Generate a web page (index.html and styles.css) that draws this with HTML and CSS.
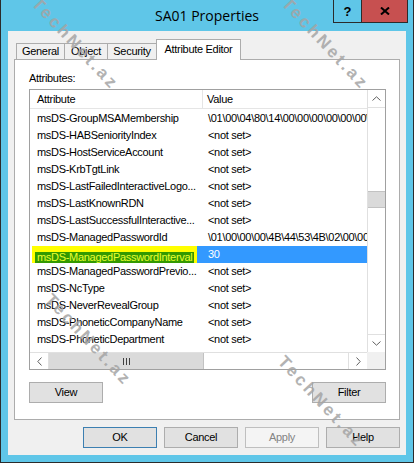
FILE: index.html
```html
<!DOCTYPE html>
<html>
<head>
<meta charset="utf-8">
<link rel="stylesheet" href="styles.css">
</head>
<body>
<div class="window">
  <div class="titlebar">
    <span class="title">SA01 Properties</span>
    <div class="caption">
      <div class="cb-help">?</div>
      <div class="cb-close">
        <svg width="10" height="8" viewBox="0 0 10 8"><path d="M1 0.5 L9 7.5 M9 0.5 L1 7.5" stroke="#000" stroke-width="2" fill="none"/></svg>
      </div>
    </div>
  </div>
  <div class="client">
    <div class="tabs">
      <div class="tab t-general">General</div>
      <div class="tab t-object">Object</div>
      <div class="tab t-security">Security</div>
      <div class="tab active t-attr">Attribute Editor</div>
    </div>
    <div class="panel">
      <div class="label">Attributes:</div>
      <div class="listbox">
        <div class="lv-main">
          <div class="lv-content">
            <div class="lv-header">
              <div class="c1">Attribute</div>
              <div class="c2">Value</div>
            </div>
            <div class="rows">
              <div class="row"><div class="c1">msDS-GroupMSAMembership</div><div class="c2">\01\00\04\80\14\00\00\00\00\00\00\00</div></div>
              <div class="row"><div class="c1">msDS-HABSeniorityIndex</div><div class="c2">&lt;not set&gt;</div></div>
              <div class="row"><div class="c1">msDS-HostServiceAccount</div><div class="c2">&lt;not set&gt;</div></div>
              <div class="row"><div class="c1">msDS-KrbTgtLink</div><div class="c2">&lt;not set&gt;</div></div>
              <div class="row"><div class="c1">msDS-LastFailedInteractiveLogo...</div><div class="c2">&lt;not set&gt;</div></div>
              <div class="row"><div class="c1">msDS-LastKnownRDN</div><div class="c2">&lt;not set&gt;</div></div>
              <div class="row"><div class="c1">msDS-LastSuccessfulInteractive...</div><div class="c2">&lt;not set&gt;</div></div>
              <div class="row"><div class="c1">msDS-ManagedPasswordId</div><div class="c2">\01\00\00\00\4B\44\53\4B\02\00\00\00</div></div>
              <div class="row sel"><div class="c1"><span class="mark"><span class="hl">msDS-ManagedPasswordInterval</span></span></div><div class="c2">30</div></div>
              <div class="row"><div class="c1">msDS-ManagedPasswordPrevio...</div><div class="c2">&lt;not set&gt;</div></div>
              <div class="row"><div class="c1">msDS-NcType</div><div class="c2">&lt;not set&gt;</div></div>
              <div class="row"><div class="c1">msDS-NeverRevealGroup</div><div class="c2">&lt;not set&gt;</div></div>
              <div class="row"><div class="c1">msDS-PhoneticCompanyName</div><div class="c2">&lt;not set&gt;</div></div>
              <div class="row"><div class="c1">msDS-PhoneticDepartment</div><div class="c2">&lt;not set&gt;</div></div>
            </div>
          </div>
          <div class="vscroll">
            <div class="arrow-v">
              <svg width="9" height="5" viewBox="0 0 9 5"><path d="M0.5 4.5 L4.5 0.8 L8.5 4.5" stroke="#606060" fill="none"/></svg>
            </div>
            <div class="vtrack"><div class="vthumb"></div></div>
            <div class="arrow-v">
              <svg width="9" height="5" viewBox="0 0 9 5"><path d="M0.5 0.5 L4.5 4.2 L8.5 0.5" stroke="#606060" fill="none"/></svg>
            </div>
          </div>
        </div>
        <div class="hscroll-row">
          <div class="hscroll">
            <div class="arrow-h">
              <svg width="5" height="9" viewBox="0 0 5 9"><path d="M4.5 0.5 L0.8 4.5 L4.5 8.5" stroke="#606060" fill="none"/></svg>
            </div>
            <div class="htrack">
              <div class="hthumb">
                <svg width="7" height="7" viewBox="0 0 7 7"><path d="M0.5 0 V7 M3.5 0 V7 M6.5 0 V7" stroke="#404040" fill="none"/></svg>
              </div>
            </div>
            <div class="arrow-h">
              <svg width="5" height="9" viewBox="0 0 5 9"><path d="M0.5 0.5 L4.2 4.5 L0.5 8.5" stroke="#606060" fill="none"/></svg>
            </div>
          </div>
          <div class="corner"></div>
        </div>
      </div>
      <div class="panel-buttons">
        <div class="btn">View</div>
        <div class="btn">Filter</div>
      </div>
    </div>
    <div class="dlg-buttons">
      <div class="btn default">OK</div>
      <div class="btn">Cancel</div>
      <div class="btn disabled">Apply</div>
      <div class="btn">Help</div>
    </div>
  </div>
</div>
<div class="wm wm1">TechNet.az</div>
<div class="wm wm2">TechNet.az</div>
<div class="wm wm3">TechNet.az</div>
<div class="wm wm4">TechNet.az</div>
</body>
</html>
```
FILE: styles.css
```css
* { box-sizing: border-box; }

body {
  margin: 0;
  width: 415px;
  height: 465px;
  overflow: hidden;
  position: relative;
  background: #fff;
  font-family: "Liberation Sans", Arial, sans-serif;
  font-size: 11px;
  letter-spacing: -0.3px;
  color: #000;
}

.window {
  width: 414px;
  height: 463px;
  background: #5fc6e8;
  border: 1px solid #2b2b2b;
  border-top: 0;
  padding: 0 7px 7px;
}

.titlebar {
  height: 31px;
  margin: 0 -7px;
  position: relative;
  text-align: center;
  font-family: "Open Sans", sans-serif;
  font-size: 14px;
  letter-spacing: 0;
  line-height: 20px;
  padding-top: 6px;
  color: #000;
}

.caption {
  position: absolute;
  top: 0;
  right: 5px;
  display: flex;
  height: 23px;
  border: 1px solid #2b2b2b;
  border-top: 0;
}

.cb-help {
  width: 28px;
  border-right: 1px solid #2b2b2b;
  display: flex;
  align-items: center;
  justify-content: center;
  font: bold 13px "Liberation Sans", Arial, sans-serif;
}

.cb-close {
  width: 45px;
  background: #c75050;
  display: flex;
  align-items: center;
  justify-content: center;
}

.client {
  height: 424px;
  background: #f0f0f0;
  padding-top: 8px;
}

.tabs {
  display: flex;
  align-items: flex-end;
  height: 20px;
  margin: 0 6px;
  padding-left: 2px;
}

.tab {
  height: 16px;
  border: 1px solid #acacac;
  border-bottom: 0;
  background: #f0f0f0;
  line-height: 15px;
  text-align: center;
  margin-left: -1px;
  white-space: nowrap;
}

.tab:first-child { margin-left: 0; }
.t-general { width: 49px; }
.t-object { width: 44px; }
.t-security { width: 50px; }

.tab.active {
  width: 85px;
  height: 21px;
  margin-bottom: -1px;
  background: #fff;
  position: relative;
  z-index: 1;
  line-height: 19px;
}

.panel {
  margin: 0 6px;
  height: 361px;
  border: 1px solid #acacac;
  background: #fff;
  padding: 11px 0 0 14px;
}

.label {
  line-height: 14px;
  height: 14px;
  margin-bottom: 4px;
}

.listbox {
  width: 357px;
  height: 281px;
  border: 1px solid #a0a0a0;
}

.lv-main {
  display: flex;
  height: 262px;
}

.lv-content {
  width: 337px;
  overflow: hidden;
}

.lv-header {
  display: flex;
  height: 19px;
  border-bottom: 1px solid #e5e5e5;
  line-height: 18px;
}

.lv-header .c1 {
  width: 173px;
  padding-left: 7px;
  border-right: 1px solid #e5e5e5;
}

.lv-header .c2 {
  flex: 1;
  padding-left: 4px;
}

.rows { padding-top: 1px; }

.row {
  display: flex;
  height: 17px;
  line-height: 17px;
  white-space: nowrap;
}

.row .c1 {
  width: 173px;
  padding-left: 7px;
  overflow: hidden;
}

.row .c2 {
  flex: 1;
  padding-left: 5px;
  overflow: hidden;
}

.row.sel .c1 {
  padding-left: 2px;
  background: linear-gradient(to right, #fff 0 2px, #39f 2px);
}

.row.sel .c1 .mark {
  display: block;
  width: 165px;
  height: 17px;
  background: #ffff00;
  padding: 3px 0 0 3px;
}

.row.sel .c1 .hl {
  display: inline-block;
  background: #339900;
  color: #e8ff30;
  line-height: 11px;
  height: 11px;
  padding: 0 2px;
}

.row.sel .c2 {
  background: #39f;
  color: #fff;
}

.vscroll {
  width: 18px;
  border-left: 1px solid #e0e0e0;
  display: flex;
  flex-direction: column;
}

.arrow-v {
  height: 17px;
  display: flex;
  align-items: center;
  justify-content: center;
}

.vtrack {
  flex: 1;
  padding-top: 83px;
  border-top: 1px solid #e0e0e0;
  border-bottom: 1px solid #e0e0e0;
}

.vthumb {
  height: 17px;
  background: #dadada;
  border-top: 1px solid #c2c2c2;
  border-bottom: 1px solid #c2c2c2;
}

.hscroll-row {
  display: flex;
  height: 17px;
}

.hscroll {
  width: 337px;
  display: flex;
  border-top: 1px solid #e0e0e0;
}

.arrow-h {
  width: 18px;
  display: flex;
  align-items: center;
  justify-content: center;
}

.htrack {
  flex: 1;
  border-left: 1px solid #e0e0e0;
  border-right: 1px solid #e0e0e0;
}

.hthumb {
  width: 155px;
  height: 100%;
  background: #dadada;
  border-right: 1px solid #c2c2c2;
  display: flex;
  align-items: center;
  justify-content: center;
}

.corner {
  width: 18px;
  background: #f0f0f0;
}

.panel-buttons {
  width: 357px;
  margin-top: 12px;
  display: flex;
  justify-content: space-between;
}

.btn {
  width: 74px;
  height: 21px;
  border: 1px solid #adadad;
  background: #e1e1e1;
  text-align: center;
  line-height: 19px;
}

.btn.default { border-color: #3c7fb1; }

.btn.disabled {
  background: #f4f4f4;
  border-color: #bfbfbf;
  color: #838383;
}

.dlg-buttons {
  display: flex;
  justify-content: flex-end;
  gap: 7px;
  margin-top: 7px;
  padding-right: 6px;
}

.wm {
  position: absolute;
  transform-origin: 0 0;
  transform: rotate(47deg);
  font: bold 17px "Liberation Sans", Arial, sans-serif;
  letter-spacing: 3px;
  color: #a5a5a5;
  white-space: nowrap;
  opacity: 0.85;
  pointer-events: none;
}

.wm1 { left: 42px; top: -6px; }
.wm2 { left: 292px; top: -6px; }
.wm3 { left: 55px; top: 290px; }
.wm4 { left: 288px; top: 352px; }
```
